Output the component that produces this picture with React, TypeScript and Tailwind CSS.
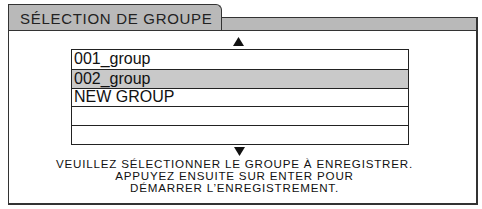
import React from 'react';

const ROWS = ['001_group', '002_group', 'NEW GROUP', '', ''];
const SELECTED = 1;

function Arrow({ down }: { down?: boolean }) {
  return (
    <svg width="11" height="9" viewBox="0 0 11 9">
      <polygon points={down ? '0,0 11,0 5.5,9' : '5.5,0 11,9 0,9'} fill="#111" />
    </svg>
  );
}

export default function App() {
  return (
    <div className="w-[482px] h-[209px] bg-white overflow-hidden" style={{ fontFamily: '"Liberation Sans", Arial, sans-serif' }}>
      <div className="ml-[8px] mt-[4px] w-[470px] flex flex-col">
        {/* Header with tab */}
        <div className="flex items-end h-[26px]">
          <div className="w-[214px] h-[26px] bg-[#b9b9b9] border-l-[1.5px] border-t-[1.5px] border-r-[1.5px] border-[#333] rounded-tr-[6px] flex items-center pl-[11px] pt-[1px] text-[15px] leading-none text-[#222] tracking-[0.7px]">
            SÉLECTION DE GROUPE
          </div>
          <div className="flex-1 h-[13px] bg-[#b9b9b9] border-t-[1.5px] border-r-[2px] border-[#333]" />
        </div>

        {/* Body */}
        <div className="h-[175px] border-t-[1.5px] border-l-[1.5px] border-r-[2px] border-b-[2px] border-[#333] flex flex-col">
          <div className="flex justify-center pr-[8px] mt-[6px] h-[9px]">
            <Arrow />
          </div>

          <div className="ml-[62px] mt-[3px] w-[338px] border-[1.5px] border-[#222]">
            {ROWS.map((row, i) => (
              <div
                key={i}
                className={`h-[18.8px] flex items-center pl-[2px] text-[16px] leading-none text-[#111] ${i > 0 ? 'border-t-[1.5px] border-[#222]' : ''} ${i === SELECTED ? 'bg-[#c9c9c9]' : 'bg-white'}`}
              >
                {row}
              </div>
            ))}
          </div>

          <div className="flex justify-center pr-[6px] mt-[2px] h-[9px]">
            <Arrow down />
          </div>

          <div className="mt-[2px] flex flex-col items-center pr-[16px] text-[11.6px] leading-[12px] text-[#111] tracking-[0.8px]">
            <span>VEUILLEZ SÉLECTIONNER LE GROUPE À ENREGISTRER.</span>
            <span>APPUYEZ ENSUITE SUR ENTER POUR</span>
            <span>DÉMARRER L’ENREGISTREMENT.</span>
          </div>
        </div>
      </div>
    </div>
  );
}
